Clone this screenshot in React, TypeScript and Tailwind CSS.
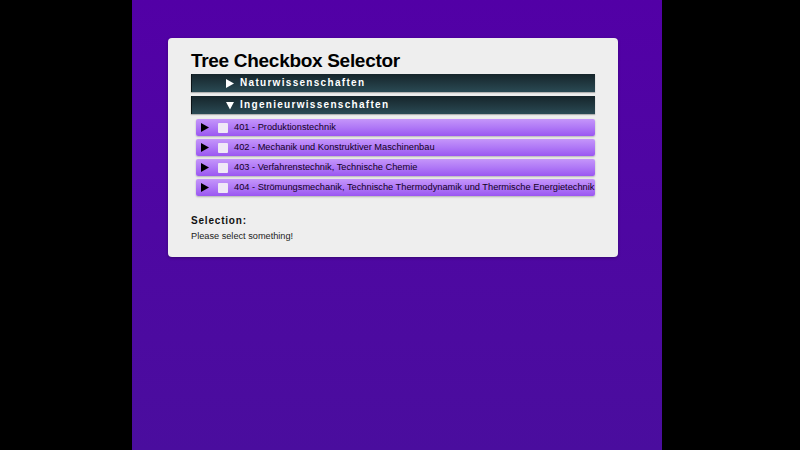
import React from "react";

const rows = [
  "401 - Produktionstechnik",
  "402 - Mechanik und Konstruktiver Maschinenbau",
  "403 - Verfahrenstechnik, Technische Chemie",
  "404 - Strömungsmechanik, Technische Thermodynamik und Thermische Energietechnik",
];

function Tri({ down, color }: { down?: boolean; color: string }) {
  return (
    <svg width="8" height="9" viewBox="0 0 8 9" className="shrink-0">
      {down ? (
        <polygon points="0,1 8,1 4,8.5" fill={color} />
      ) : (
        <polygon points="0,0 8,4.5 0,9" fill={color} />
      )}
    </svg>
  );
}

function DarkBar({ label, open }: { label: string; open: boolean }) {
  return (
    <div className="h-[18px] flex items-center bg-gradient-to-b from-[#16252b] to-[#2a4a54] border-l border-[#0c1418] shadow-[0_1px_1px_rgba(0,0,0,0.25)]">
      <span className="ml-[34px] w-[14px] flex items-center">
        <Tri down={open} color="#ffffff" />
      </span>
      <span className="text-white text-[10px] font-bold tracking-[1.3px] leading-none">{label}</span>
    </div>
  );
}

export default function App() {
  return (
    <div className="w-[800px] h-[450px] bg-black flex font-['Liberation_Sans',Arial,sans-serif]">
      <div className="ml-[132px] w-[530px] h-[450px] bg-gradient-to-b from-[#5200a6] to-[#4a0d9e]">
        <div className="ml-[36px] mt-[38px] w-[450px] bg-[#eeeeee] rounded-[4px] px-[23px] pt-[11px] pb-[15px] shadow-[0_1px_3px_rgba(0,0,0,0.3)]">
          <div className="text-[19px] font-bold text-black leading-[24px] tracking-[-0.3px]">Tree Checkbox Selector</div>
          <div className="mt-[1px] flex flex-col gap-[4px]">
            <DarkBar label="Naturwissenschaften" open={false} />
            <DarkBar label="Ingenieurwissenschaften" open={true} />
          </div>
          <div className="ml-[5px] mt-[5px] flex flex-col gap-[3px]">
            {rows.map((r) => (
              <div
                key={r}
                className="h-[17px] flex items-center bg-gradient-to-b from-[#c596fa] to-[#9b56f1] rounded-[2px] shadow-[0_1px_2px_rgba(0,0,0,0.25)]"
              >
                <span className="ml-[5px] w-[17px] shrink-0 flex items-center">
                  <Tri color="#000000" />
                </span>
                <span className="w-[10px] h-[10px] shrink-0 bg-[#efe8f6] rounded-[1px]"></span>
                <span className="ml-[6px] text-[9.25px] text-[#110022] leading-none whitespace-nowrap">{r}</span>
              </div>
            ))}
          </div>
          <div className="mt-[19px] text-[10px] font-bold tracking-[0.8px] text-[#111] leading-[12px]">Selection:</div>
          <div className="mt-[3px] text-[9.2px] text-[#222] leading-[12px]">Please select something!</div>
        </div>
      </div>
    </div>
  );
}
